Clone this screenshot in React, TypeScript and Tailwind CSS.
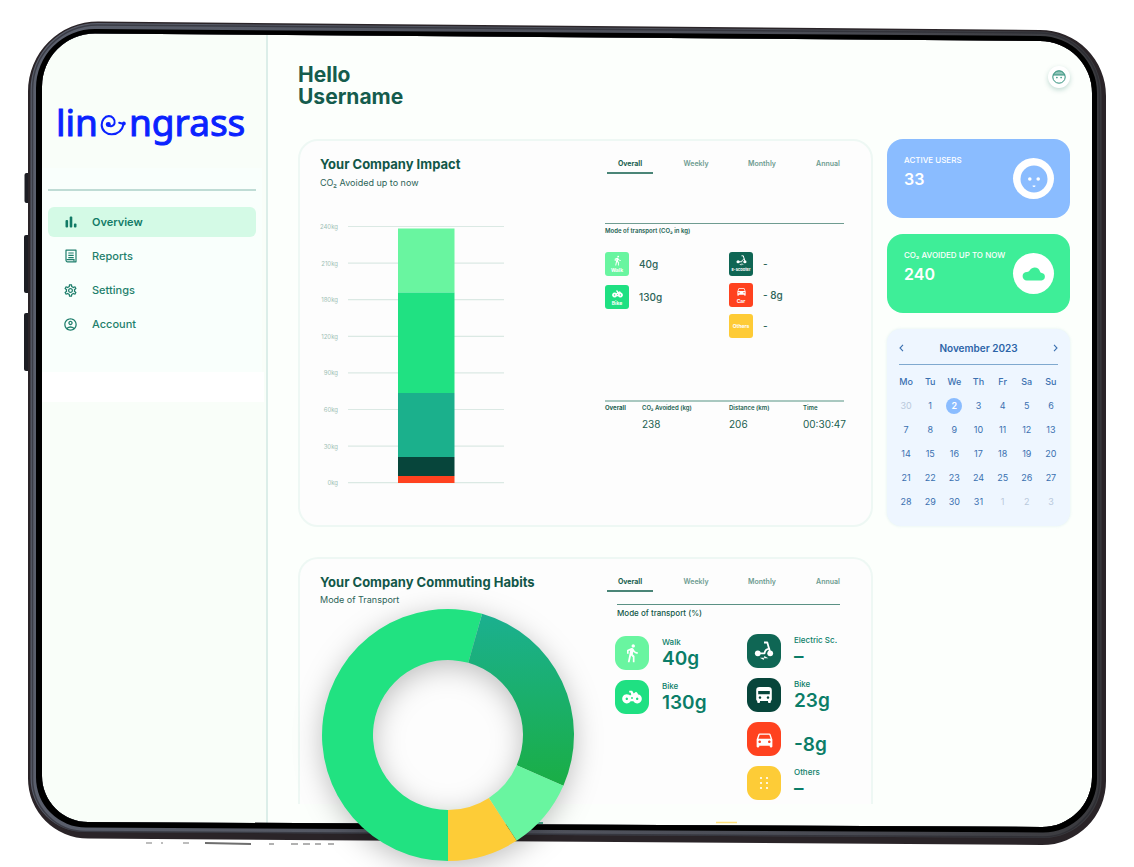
import React, { useState } from "react";
import {
  MdDirectionsCar,
  MdDirectionsWalk,
  MdOutlineAccountCircle,
  MdOutlineSettings,
} from "react-icons/md";

type Edges = {
  left: number;
  right: number;
  topLeft: number;
  topRight: number;
  bottomRight: number;
  bottomLeft: number;
  radii: [number, number, number, number];
};

function outline({ left, right, topLeft, topRight, bottomRight, bottomLeft, radii }: Edges) {
  const [tl, tr, br, bl] = radii;
  return [
    `M${left} ${topLeft + tl}`,
    `A${tl} ${tl} 0 0 1 ${left + tl} ${topLeft}`,
    `L${right - tr} ${topRight}`,
    `A${tr} ${tr} 0 0 1 ${right} ${topRight + tr}`,
    `L${right} ${bottomRight - br}`,
    `A${br} ${br} 0 0 1 ${right - br} ${bottomRight}`,
    `L${left + bl} ${bottomLeft}`,
    `A${bl} ${bl} 0 0 1 ${left} ${bottomLeft - bl}`,
    "Z",
  ].join(" ");
}

const rim = outline({ left: 28, right: 1106, topLeft: 21.5, topRight: 30, bottomRight: 845, bottomLeft: 838.5, radii: [70, 66, 64, 60] });
const band = outline({ left: 30.5, right: 1101.5, topLeft: 23, topRight: 31.5, bottomRight: 838, bottomLeft: 832, radii: [67, 63, 58, 54] });
const bezel = outline({ left: 36, right: 1097, topLeft: 29, topRight: 36, bottomRight: 832.5, bottomLeft: 827.5, radii: [59, 57, 54, 50] });
const glass = outline({ left: 42, right: 1092, topLeft: 33.5, topRight: 41, bottomRight: 827, bottomLeft: 822, radii: [53, 52, 50, 46] });

function TabletFrame() {
  return (
    <svg
      aria-hidden="true"
      className="pointer-events-none absolute inset-0 z-10 h-full w-full"
      viewBox="0 0 1134 867"
      preserveAspectRatio="none"
    >
      <defs>
        <linearGradient id="metal" x1="0" y1="0" x2="1" y2="0">
          <stop offset="0" stopColor="#5a5f6c" />
          <stop offset="0.7" stopColor="#4b4d56" />
          <stop offset="1" stopColor="#3a3a3e" />
        </linearGradient>
      </defs>
      <g fill="#1d1e24">
        <rect x="24.5" y="173" width="6" height="30" rx="2" />
        <rect x="24" y="235" width="6" height="58" rx="2" />
        <rect x="24" y="313" width="6" height="58" rx="2" />
      </g>
      <path fill="#2a2428" fillRule="evenodd" d={`${rim} ${glass}`} />
      <path fill="url(#metal)" fillRule="evenodd" d={`${band} ${glass}`} />
      <path fill="none" stroke="#26272d" strokeWidth="1.5" d={outline({ left: 32.5, right: 1099.5, topLeft: 25, topRight: 33, bottomRight: 837, bottomLeft: 831.5, radii: [65, 61, 57, 53] })} opacity="0.6" />
      <path fill="#000" fillRule="evenodd" d={`${bezel} ${glass}`} />
      <g stroke="#4a4a4a" strokeWidth="1.5" opacity="0.8">
        <path d="M146 843h6M161 843h2M183 843h6" opacity="0.6" />
        <path d="M205 843l46 1" strokeWidth="2" />
        <path d="M269 844h5M291 844h7M303 844h7M315 844h6M328 844h6" opacity="0.7" />
      </g>
      <path d="M716 822.5h21" stroke="#ffe07a" strokeWidth="1.5" />
      <path d="M520 823h23" stroke="#1d9a78" strokeWidth="1.5" />
    </svg>
  );
}

function Logo() {
  return (
    <div
      aria-label="linengrass"
      className="flex items-baseline whitespace-nowrap font-['Noto_Sans',sans-serif] text-[37px] leading-[48px] text-[#0a22ff] [-webkit-text-stroke:1px_#0a22ff]"
    >
      <span>lin</span>
      <svg aria-hidden="true" className="mx-0.5 h-[22px] w-[27px]" viewBox="0 0 26 21" fill="none">
        <path
          d="M7.500 10C8.500 12.400 13 12.400 14 8.900C15 4.900 11.500 1.800 8.500 1.800C4.500 1.900 1.500 6 1.600 10.500C1.800 15.900 6 19.600 11.500 19.400C17.500 19.200 21.500 15 22.800 9.500L18.500 8.300"
          stroke="#0a22ff"
          strokeWidth="2"
          strokeLinecap="round"
          strokeLinejoin="round"
        />
        <circle cx="8" cy="10" r="2.400" fill="#0a22ff" />
        <circle cx="23" cy="9" r="1.800" fill="#0a22ff" />
      </svg>
      <span>ngrass</span>
    </div>
  );
}

function BarsIcon() {
  return (
    <svg aria-hidden="true" className="h-[14px] w-[14px]" viewBox="0 0 14 14" fill="currentColor">
      <rect x="1.500" y="5" width="2.600" height="7.500" rx="1" />
      <rect x="5.700" y="1.500" width="2.600" height="11" rx="1" />
      <rect x="9.900" y="8.500" width="2.600" height="4" rx="1" />
    </svg>
  );
}

function ReportIcon() {
  return (
    <svg aria-hidden="true" className="h-[14px] w-[14px]" viewBox="0 0 14 14" fill="none" stroke="currentColor" strokeWidth="1.200">
      <path d="M2 1.200h10v11.600H3.500a1.500 1.500 0 0 1-1.500-1.500z" strokeLinejoin="round" />
      <path d="M4.300 4h5.400M4.300 6.300h5.400M4.300 8.600h5.400M2.500 10.700h7.500v1.800" />
    </svg>
  );
}

function BikeIcon({ className }: { className: string }) {
  return (
    <svg aria-hidden="true" className={className} viewBox="0 0 20 14" fill="currentColor">
      <path fillRule="evenodd" d="M4.800 4.200a4.600 4.600 0 1 0 .01 0zM4.800 7.600a1.200 1.200 0 1 1-.01 0zM15.200 4.200a4.600 4.600 0 1 0 .01 0zM15.200 7.600a1.200 1.200 0 1 1-.01 0z" />
      <path d="M7.200.8h3l1.500 2.700 2.300-1.700 1.500 1.200.8 2.500-3.300 2.600-1.800 3.200H8.700L6.500 7l2.800-2.600-.7-1.900H7.200z" />
      <circle cx="10" cy="8" r="0.9" fill="#1fe082" />
    </svg>
  );
}

function ScooterIcon({ className }: { className: string }) {
  return (
    <svg aria-hidden="true" className={className} viewBox="0 0 20 20" fill="currentColor">
      <circle cx="3.800" cy="12.300" r="2.900" />
      <circle cx="16.200" cy="12.300" r="2.900" />
      <path d="M3.800 12.300H10.500C10.800 9.700 12.600 8 15 7.600L13.300 1.500H10" fill="none" stroke="currentColor" strokeWidth="1.800" strokeLinejoin="round" />
      <path d="M15 7l1.300 5.300" stroke="currentColor" strokeWidth="1.800" />
      <path d="M5.800 16.800h4.400v-1.700l4.200 2.200H9.800V19z" />
    </svg>
  );
}

function BusIcon() {
  return (
    <svg aria-hidden="true" className="h-[18px] w-[18px]" viewBox="0 0 18 18" fill="currentColor">
      <path
        fillRule="evenodd"
        d="M4.500 1h9A3.300 3.300 0 0 1 16.800 4.300V13.500a1.500 1.500 0 0 1-1 1.400V16a1 1 0 0 1-1 1h-.8a1 1 0 0 1-1-1v-1H5v1a1 1 0 0 1-1 1h-.8a1 1 0 0 1-1-1v-1.100a1.500 1.500 0 0 1-1-1.400V4.300A3.300 3.300 0 0 1 4.500 1zM3.200 5v3.200h11.600V5zM5 10.300a1.250 1.250 0 1 0 .01 0zM13 10.300a1.250 1.250 0 1 0 .01 0z"
      />
    </svg>
  );
}

function CloudIcon() {
  return (
    <svg aria-hidden="true" className="h-[14px] w-6" viewBox="0 0 24 14" fill="#3eee98">
      <path d="M4.800 13.500A4.300 4.300 0 0 1 5 4.900C6.300 4.900 7 4.700 7.800 3.300C9 1.300 10.900.5 12.700.5C15.300.5 17.300 2 18 4.500C18.300 5.400 18.800 5.700 19.800 5.900A3.850 3.850 0 0 1 19.500 13.500z" />
    </svg>
  );
}

function DotsIcon() {
  return (
    <svg aria-hidden="true" className="h-4 w-4" viewBox="0 0 16 16" fill="currentColor">
      {[3, 8, 13].map((y) => (
        <g key={y}>
          <circle cx="5" cy={y} r="1.100" />
          <circle cx="11" cy={y} r="1.100" />
        </g>
      ))}
    </svg>
  );
}

const navItems = [
  { label: "Overview", icon: <BarsIcon /> },
  { label: "Reports", icon: <ReportIcon /> },
  { label: "Settings", icon: <MdOutlineSettings size={15} /> },
  { label: "Account", icon: <MdOutlineAccountCircle size={15} /> },
];

function Sidebar() {
  return (
    <aside className="w-[232px] shrink-0 rounded-l-[54px] border-r-2 border-[#dceee9] bg-[#f9fef9] pl-1.5">
      <div className="flex h-[136px] items-center pl-[14px] pt-11">
        <Logo />
      </div>
      <nav className="mr-1 h-[204px] bg-[#f9fffc] px-1.5 pt-[21px]">
        <div className="h-0.5 bg-[#bfdcd5]" />
        <ul className="mt-4 flex flex-col gap-1">
          {navItems.map((item, i) => (
            <li key={item.label}>
              <a
                href={"#" + item.label.toLowerCase()}
                className={
                  i === 0
                    ? "flex h-[30px] items-center gap-[14px] rounded-md bg-[#d4fae6] pl-[15px] text-[11px] font-semibold text-[#127a66]"
                    : "flex h-[30px] items-center gap-[14px] rounded-md pl-[15px] text-[11px] font-medium text-[#1f7f6c]"
                }
              >
                <span className="flex w-[15px] justify-center">{item.icon}</span>
                {item.label}
              </a>
            </li>
          ))}
        </ul>
      </nav>
      <div className="mr-0.5 h-[30px] bg-white" />
    </aside>
  );
}

const periods = ["Overall", "Weekly", "Monthly", "Annual"];

function PeriodTabs() {
  const [active, setActive] = useState("Overall");
  return (
    <div role="tablist" className="ml-0.5 flex justify-between">
      {periods.map((p) => (
        <button
          key={p}
          role="tab"
          aria-selected={p === active}
          onClick={() => setActive(p)}
          className={
            p === active
              ? "h-5 w-[46px] border-b-2 border-[#4a8577] pt-0.5 text-[7px] font-bold text-[#1b5f50]"
              : "h-5 w-[46px] border-b-2 border-transparent pt-0.5 text-[7px] font-semibold text-[#6e9c91]"
          }
        >
          {p}
        </button>
      ))}
    </div>
  );
}

const ticks = ["240kg", "210kg", "180kg", "120kg", "90kg", "60kg", "30kg", "0kg"];
const segments = [
  { y: 12.5, h: 64, fill: "#69f5a0" },
  { y: 76.5, h: 100.5, fill: "#20e182" },
  { y: 177, h: 64, fill: "#1bb08c" },
  { y: 241, h: 19, fill: "#07453b" },
  { y: 260, h: 7, fill: "#ff421f" },
];

function ImpactChart() {
  return (
    <svg role="img" aria-label="CO₂ avoided by mode of transport" className="mt-[27px] h-[276px] w-[190px]" viewBox="0 0 190 276">
      {ticks.map((t, i) => (
        <g key={t}>
          <text x="18" y={13 + i * 36.6} textAnchor="end" className="fill-[#9dbfb5] text-[6px]">
            {t}
          </text>
          <path d={`M28 ${10.5 + i * 36.6}h156`} stroke="#dbe9e4" strokeWidth="1.200" />
        </g>
      ))}
      {segments.map((s) => (
        <rect key={s.y} x="78" y={s.y} width="56.500" height={s.h} fill={s.fill} />
      ))}
    </svg>
  );
}

function SmallTile({ color, label, value, icon }: { color: string; label: string; value: string; icon?: React.ReactNode }) {
  const labelSize = label.length > 6 ? "text-[4px]" : "text-[5px]";
  return (
    <div className="flex items-center gap-2.5">
      <div className={`flex h-6 w-6 flex-col items-center justify-center gap-px rounded-[3px] text-white ${color}`}>
        {icon}
        <span className={`whitespace-nowrap font-bold leading-[6px] ${labelSize}`}>{label}</span>
      </div>
      <span className="whitespace-pre text-[10px] font-medium text-[#2c6458]">{value}</span>
    </div>
  );
}

function ImpactCard() {
  return (
    <section className="flex h-[388px] justify-between rounded-[20px] border-2 border-[#eef8f4] bg-[#fdfdfd] px-5 pt-[13px]">
      <div>
        <h2 className="text-[13px] font-bold leading-5 text-[#125748]">Your Company Impact</h2>
        <p className="mt-[3px] text-[9px] leading-3 text-[#2c6458]">CO₂ Avoided up to now</p>
        <ImpactChart />
      </div>
      <div className="w-[246px]">
        <PeriodTabs />
        <div className="mr-[7px]">
          <div className="mt-[49px] border-t border-[#6f9c91] pt-0.5 text-[6px] font-semibold leading-[10px] text-[#1b5f50]">
            Mode of transport (CO₂ in kg)
          </div>
          <div className="mt-4 grid h-[86px] grid-cols-[124px_1fr] items-start">
            <div className="flex flex-col gap-[9px]">
              <SmallTile color="bg-[#69f5a0]" label="Walk" value="40g" icon={<MdDirectionsWalk size={11} />} />
              <SmallTile color="bg-[#1fe082]" label="Bike" value="130g" icon={<BikeIcon className="h-2.5 w-[11px]" />} />
            </div>
            <div className="flex flex-col gap-[7px]">
              <SmallTile color="bg-[#0f6654]" label="E-scooter" value="-" icon={<ScooterIcon className="h-[11px] w-[11px]" />} />
              <SmallTile color="bg-[#ff421f]" label="Car" value="- 8g" icon={<MdDirectionsCar size={11} />} />
              <SmallTile color="bg-[#fecb36]" label="Others" value="-" />
            </div>
          </div>
          <table className="mt-[62px] w-full table-fixed border-t-2 border-[#a9c8c0] text-left text-[#1b5f50]">
            <colgroup>
              <col className="w-[37px]" />
              <col className="w-[87px]" />
              <col className="w-[74px]" />
              <col />
            </colgroup>
            <thead>
              <tr className="h-3 whitespace-nowrap text-[6px] leading-3">
                <th className="p-0 font-bold">Overall</th>
                <th className="p-0 font-semibold">CO₂ Avoided (kg)</th>
                <th className="p-0 font-semibold">Distance (km)</th>
                <th className="p-0 font-semibold">Time</th>
              </tr>
            </thead>
            <tbody>
              <tr className="h-5 whitespace-nowrap text-[10px] leading-5">
                <td className="p-0" />
                <td className="p-0">238</td>
                <td className="p-0">206</td>
                <td className="p-0">00:30:47</td>
              </tr>
            </tbody>
          </table>
        </div>
      </div>
    </section>
  );
}

function point(radius: number, degrees: number) {
  const a = (degrees * Math.PI) / 180;
  return `${(126 + radius * Math.sin(a)).toFixed(2)} ${(126 - radius * Math.cos(a)).toFixed(2)}`;
}

function slice(from: number, to: number) {
  const large = to - from > 180 ? 1 : 0;
  return `M${point(126, from)}A126 126 0 ${large} 1 ${point(126, to)}L${point(75, to)}A75 75 0 ${large} 0 ${point(75, from)}Z`;
}

function HabitsDonut() {
  return (
    <svg
      role="img"
      aria-label="Share of each mode of transport"
      className="absolute left-[22px] top-[50px] z-20 h-[252px] w-[252px] overflow-visible drop-shadow-[0_6px_14px_rgba(0,0,0,0.25)]"
      viewBox="0 0 252 252"
    >
      <defs>
        <linearGradient id="teal" x1="0" y1="0" x2="0" y2="1">
          <stop offset="0" stopColor="#1bb090" />
          <stop offset="1" stopColor="#1aae45" />
        </linearGradient>
      </defs>
      <path d={slice(180, 375.7)} fill="#21e281" />
      <path d={slice(15.7, 113.7)} fill="url(#teal)" />
      <path d={slice(113.7, 147)} fill="#69f5a0" />
      <path d={slice(147, 180)} fill="#fdcc37" />
    </svg>
  );
}

function Habit({ color, label, value, icon }: { color: string; label?: string; value: string; icon: React.ReactNode }) {
  return (
    <div className="flex h-[34px] gap-[13px]">
      <div className={`flex h-[34px] w-[34px] items-center justify-center rounded-[11px] text-white ${color}`}>{icon}</div>
      <div className="flex flex-col justify-end whitespace-nowrap text-[#0b7d68]">
        <span className="text-[8px] font-medium leading-[10px]">{label}</span>
        <span className="text-[19px] font-semibold leading-[23px]">{value}</span>
      </div>
    </div>
  );
}

function HabitsCard() {
  return (
    <section className="relative flex h-[247px] justify-between rounded-t-[20px] border-2 border-b-0 border-[#eef8f4] bg-[#fdfdfd] px-5 pt-[13px]">
      <div>
        <h2 className="text-[13px] font-bold leading-5 text-[#125748]">Your Company Commuting Habits</h2>
        <p className="text-[9px] leading-4 text-[#2c6458]">Mode of Transport</p>
      </div>
      <HabitsDonut />
      <div className="w-[246px]">
        <PeriodTabs />
        <div className="ml-3 mr-[11px] mt-3 border-t border-[#5b9184] pt-0.5 text-[8px] font-medium leading-3 text-[#125748]">
          Mode of transport (%)
        </div>
        <div className="ml-2.5 mt-[15px] grid grid-cols-[132px_1fr] items-start">
          <div className="flex flex-col gap-2.5 pt-0.5">
            <Habit color="bg-[#69f5a0]" label="Walk" value="40g" icon={<MdDirectionsWalk size={20} />} />
            <Habit color="bg-[#1fe082]" label="Bike" value="130g" icon={<BikeIcon className="h-[14px] w-5" />} />
          </div>
          <div className="flex flex-col gap-2.5">
            <Habit color="bg-[#0f6654]" label="Electric Sc." value="–" icon={<ScooterIcon className="h-5 w-5" />} />
            <Habit color="bg-[#07453b]" label="Bike" value="23g" icon={<BusIcon />} />
            <Habit color="bg-[#ff421f]" value="-8g" icon={<MdDirectionsCar size={21} />} />
            <Habit color="bg-[#fdcc37]" label="Others" value="–" icon={<DotsIcon />} />
          </div>
        </div>
      </div>
    </section>
  );
}

function StatCard({ color, label, value, icon }: { color: string; label: string; value: string; icon: React.ReactNode }) {
  return (
    <section className={`flex h-[79px] items-center justify-between rounded-[16px] pl-[17px] pr-4 text-white ${color}`}>
      <div className="w-[109px] whitespace-nowrap pb-[14px]">
        <h3 className="text-[8px] font-medium leading-[14px]">{label}</h3>
        <p className="text-[16px] font-semibold leading-6">{value}</p>
      </div>
      <div className="flex h-[41px] w-[41px] shrink-0 items-center justify-center rounded-full bg-white">{icon}</div>
    </section>
  );
}

const week = ["Mo", "Tu", "We", "Th", "Fr", "Sa", "Su"];
const days = [
  [30, 1, 2, 3, 4, 5, 6],
  [7, 8, 9, 10, 11, 12, 13],
  [14, 15, 16, 17, 18, 19, 20],
  [21, 22, 23, 24, 25, 26, 27],
  [28, 29, 30, 31, 1, 2, 3],
];

function Chevron({ d }: { d: string }) {
  return (
    <svg aria-hidden="true" className="h-2 w-2" viewBox="0 0 8 8" fill="none" stroke="currentColor" strokeWidth="1.100">
      <path d={d} />
    </svg>
  );
}

function Calendar() {
  return (
    <section className="h-[197px] rounded-[14px] bg-[#eef6ff] px-[7px] pt-[11px] text-[#3a70b0] shadow-[0_0_3px_rgba(220,238,240,0.9)]">
      <div className="mx-[5px] flex h-[25px] items-start justify-between border-b border-[#7fa9cf] leading-4">
        <button aria-label="Previous month" className="flex h-4 items-center">
          <Chevron d="M4 .8L1 4l3 3.200" />
        </button>
        <h3 className="text-[10px] font-semibold leading-4 text-[#2c64a8]">November 2023</h3>
        <button aria-label="Next month" className="flex h-4 items-center">
          <Chevron d="M4 .8L7 4 4 7.200" />
        </button>
      </div>
      <table className="mt-1 w-full table-fixed text-center text-[9px]">
        <thead>
          <tr className="h-[25px]">
            {week.map((d) => (
              <th key={d} className="p-0 font-medium">
                {d}
              </th>
            ))}
          </tr>
        </thead>
        <tbody>
          {days.map((row, r) => (
            <tr key={r} className="h-6">
              {row.map((d, c) => {
                const outside = (r === 0 && c === 0) || (r === 4 && c > 3);
                const today = r === 0 && c === 2;
                return (
                  <td key={c} className={outside ? "p-0 text-[#b9c9dc]" : "p-0"}>
                    <span
                      className={
                        today
                          ? "mx-auto flex h-4 w-4 items-center justify-center rounded-full bg-[#8abcff] font-semibold text-white"
                          : "mx-auto flex h-4 w-4 items-center justify-center"
                      }
                    >
                      {d}
                    </span>
                  </td>
                );
              })}
            </tr>
          ))}
        </tbody>
      </table>
    </section>
  );
}

export default function App() {
  return (
    <div className="relative flex min-h-screen overflow-hidden bg-white pb-[35px] pl-9 pr-9 pt-8 font-['Inter',sans-serif]">
      <TabletFrame />
      <div className="flex flex-1 rounded-[54px] bg-[#fcfffc]">
        <Sidebar />
        <main className="min-w-0 flex-1 pb-7 pl-[30px] pr-7">
          <header className="flex h-[107px] items-start justify-between pt-8">
            <h1 className="w-28 text-[21px] font-bold leading-[22px] text-[#155c4d]">Hello Username</h1>
            <button
              aria-label="Profile"
              className="mt-0.5 flex h-[22px] w-[22px] items-center justify-center rounded-full bg-white shadow-[0_2px_5px_rgba(20,110,90,0.25)]"
            >
              <svg aria-hidden="true" className="h-[14px] w-[14px]" viewBox="0 0 14 14" fill="none" stroke="#2f8f7b">
                <path d="M1.200 5A6 6 0 0 1 12.800 5z" fill="#8fc4b7" stroke="none" />
                <circle cx="7" cy="7" r="6.200" />
                <path d="M1.200 5h11.600" />
                <circle cx="4.900" cy="7.600" r="0.8" fill="#2f8f7b" stroke="none" />
                <circle cx="9.100" cy="7.600" r="0.8" fill="#2f8f7b" stroke="none" />
              </svg>
            </button>
          </header>
          <div className="grid grid-cols-[minmax(0,1fr)_183px] items-start gap-x-[14px]">
            <div className="flex flex-col gap-[30px]">
              <ImpactCard />
              <HabitsCard />
            </div>
            <div className="flex flex-col gap-4">
              <StatCard
                color="bg-[#8abcff]"
                label="ACTIVE USERS"
                value="33"
                icon={
                  <svg aria-hidden="true" className="h-7 w-7" viewBox="0 0 28 28">
                    <circle cx="14" cy="14" r="13.500" fill="#8abcff" />
                    <circle cx="9.800" cy="14" r="1.800" fill="#fff" />
                    <circle cx="18.200" cy="14" r="1.800" fill="#fff" />
                    <path d="M12.500 20.500a1.500 1.500 0 0 0 3 0z" fill="#fff" />
                  </svg>
                }
              />
              <StatCard color="bg-[#3eee98]" label="CO₂ AVOIDED UP TO NOW" value="240" icon={<CloudIcon />} />
              <Calendar />
            </div>
          </div>
        </main>
      </div>
    </div>
  );
}
